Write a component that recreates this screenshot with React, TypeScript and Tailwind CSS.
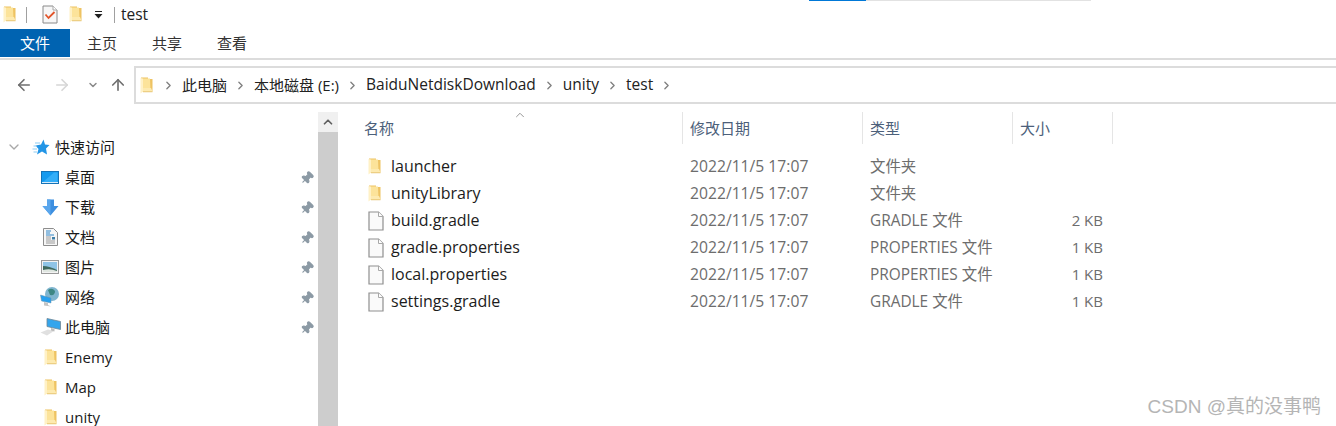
import { ArrowLeft, ArrowRight, ArrowUp, ChevronDown, ChevronRight, ChevronUp, Pin } from 'lucide-react';

const sansStack = "font-['Open_Sans','Noto_Sans_CJK_SC',sans-serif]";

function FolderIcon({ className = '' }: { className?: string }) {
  return (
    <svg width="13" height="17" viewBox="0 0 13 17" className={`shrink-0 ${className}`}>
      <path d="M1 0.5 H8 V2 H12.5 V14.5 H1 Z" fill="#eec363" />
      <path d="M3 1.5 H10 L10.5 13 L12.5 14.5 H3 Z" fill="#fce39a" />
      <path d="M3 11 H11 L12.5 14.5 H3 Z" fill="#fdeab0" />
      <path d="M0.5 1 L3 1.5 V14.5 L0.5 16.5 Z" fill="#fff1c6" />
      <path d="M3 14.5 H12.5 V15.2 H3 Z" fill="#dfb95e" />
    </svg>
  );
}

function FileIcon() {
  return (
    <svg width="16" height="20" viewBox="0 0 16 20" className="shrink-0">
      <path d="M1 1 H10.5 L15 5.5 V19 H1 Z" fill="#fafafa" stroke="#8f8f8f" strokeWidth="1.2" />
      <path d="M10.5 1 V5.5 H15" fill="#fff" stroke="#a8a8a8" strokeWidth="1" />
    </svg>
  );
}

function TaskIcon() {
  return (
    <svg width="16" height="19" viewBox="0 0 16 19" className="shrink-0">
      <path d="M1 1 H11 L15 5 V18 H1 Z" fill="#f7f7f7" stroke="#8a8a8a" />
      <path d="M11 1 V5 H15" fill="#fff" stroke="#a8a8a8" />
      <path d="M3.5 9.5 L6.5 13 L12.5 7" fill="none" stroke="#e2552b" strokeWidth="1.8" />
    </svg>
  );
}

function DropCaret() {
  return (
    <svg width="9" height="8" viewBox="0 0 9 8" className="shrink-0">
      <rect x="1" y="0" width="7" height="1" fill="#222" />
      <path d="M0.5 3 H8.5 L4.5 7.5 Z" fill="#222" />
    </svg>
  );
}

function QuickIcon() {
  return (
    <svg width="18" height="17" viewBox="0 0 18 17" className="shrink-0">
      <path d="M11.5 0.5 L13 5.5 L17.5 6 L14 9.5 L15 15.5 L10 12.5 L5 15.5 L6.5 10 L3.5 6.5 L9 5.5 Z" fill="#2295e6" />
      <path d="M3 4 H8 M1.5 7 H5 M0.5 10 H5 M1.5 13 H5" stroke="#8ccbf2" strokeWidth="1" />
    </svg>
  );
}

function DesktopIcon() {
  return (
    <svg width="18" height="13" viewBox="0 0 18 13" className="shrink-0">
      <rect x="0.5" y="0.5" width="17" height="12" fill="#149aef" stroke="#1473b8" />
      <path d="M2 11 L13 1.5 H16.5 V11 Z" fill="#34aef8" />
      <rect x="1" y="11" width="16" height="1" fill="#d6ecfb" />
    </svg>
  );
}

function DownloadIcon() {
  return (
    <svg width="17" height="17" viewBox="0 0 17 17" className="shrink-0">
      <path d="M5 0.5 H12 V7 H16.5 L8.5 16.5 L0.5 7 H5 Z" fill="#3d8fe0" />
      <path d="M5 0.5 H8.5 V16.5 L0.5 7 H5 Z" fill="#5aa6ec" />
    </svg>
  );
}

function DocIcon() {
  return (
    <svg width="15" height="18" viewBox="0 0 15 18" className="shrink-0">
      <path d="M0.5 0.5 H10.5 L14.5 4.5 V17.5 H0.5 Z" fill="#f6f6f6" stroke="#8d8d8d" />
      <path d="M3 3 H8 M3 5 H7 M3 7 H11" stroke="#2f86c9" />
      <path d="M3 9 H8 M3 11 H8 M3 13 H12 M3 15 H12" stroke="#9a9a9a" />
      <rect x="9" y="9" width="3" height="2.5" fill="#3f7fa8" />
    </svg>
  );
}

function PictureIcon() {
  return (
    <svg width="18" height="14" viewBox="0 0 18 14" className="shrink-0">
      <rect x="0.5" y="0.5" width="17" height="13" fill="#f3f3f3" stroke="#9a9a9a" />
      <rect x="2" y="2" width="14" height="10" fill="#8fc4e6" />
      <path d="M2 6 Q8 6 16 10 V12 H2 Z" fill="#3f6a5e" />
      <path d="M2 10 Q9 8 16 11 V12 H2 Z" fill="#dfe6e0" />
    </svg>
  );
}

function NetworkIcon() {
  return (
    <svg width="20" height="20" viewBox="0 0 20 20" className="shrink-0">
      <circle cx="12" cy="7" r="7" fill="#7fb5cf" />
      <path d="M8 3 Q12 0 15 4 Q15 9 10 8 Z" fill="#3d8784" />
      <path d="M0.5 8 L11 11 V16 L1.5 14 Z" fill="#27a0ef" stroke="#6b93ad" strokeWidth="0.5" />
      <path d="M4 15 L8 16 L8 18 L11 19.5 L4 18.5 Z" fill="#c4c4c4" />
    </svg>
  );
}

function ComputerIcon() {
  return (
    <svg width="21" height="18" viewBox="0 0 21 18" className="shrink-0">
      <path d="M7 0.5 L20.5 3.5 V11.5 L7 8.5 Z" fill="#35a5ec" stroke="#6f8796" strokeWidth="0.8" />
      <path d="M0.5 14.5 L8 11.5 L14 13 L7 17.5 Z" fill="#e0e0e0" />
      <path d="M11 10 L14.5 11 V13.5 L11 12.5 Z" fill="#bcbcbc" />
    </svg>
  );
}

const navItems = [
  { label: '桌面', icon: <DesktopIcon />, pinned: true },
  { label: '下载', icon: <DownloadIcon />, pinned: true },
  { label: '文档', icon: <DocIcon />, pinned: true },
  { label: '图片', icon: <PictureIcon />, pinned: true },
  { label: '网络', icon: <NetworkIcon />, pinned: true },
  { label: '此电脑', icon: <ComputerIcon />, pinned: true },
  { label: 'Enemy', icon: <FolderIcon />, pinned: false },
  { label: 'Map', icon: <FolderIcon />, pinned: false },
  { label: 'unity', icon: <FolderIcon />, pinned: false },
];

const files = [
  { name: 'launcher', type: '文件夹', size: '', folder: true },
  { name: 'unityLibrary', type: '文件夹', size: '', folder: true },
  { name: 'build.gradle', type: 'GRADLE 文件', size: '2 KB', folder: false },
  { name: 'gradle.properties', type: 'PROPERTIES 文件', size: '1 KB', folder: false },
  { name: 'local.properties', type: 'PROPERTIES 文件', size: '1 KB', folder: false },
  { name: 'settings.gradle', type: 'GRADLE 文件', size: '1 KB', folder: false },
];

function Crumb() {
  return <ChevronRight size={13} strokeWidth={2.5} className="mx-[7px] shrink-0 text-[#808080]" />;
}

export default function App() {
  return (
    <div className={`relative h-[426px] w-[1336px] overflow-hidden bg-white text-[15px] text-[#1a1a1a] ${sansStack}`}>
      <div className="absolute left-[809px] top-0 flex h-px">
        <div className="w-[57px] bg-[#0078d7]" />
        <div className="w-[225px] bg-[#e2e2e2]" />
      </div>

      <div className="flex h-[29px] items-center pl-[3px]">
        <FolderIcon />
        <div className="ml-[10px] h-[16px] w-px bg-[#a0a0a0]" />
        <div className="ml-[15px]"><TaskIcon /></div>
        <FolderIcon className="ml-[11px]" />
        <div className="ml-[12px]"><DropCaret /></div>
        <div className="ml-[11px] h-[16px] w-px bg-[#a0a0a0]" />
        <span className="ml-[6px] text-[15.5px] text-[#222]">test</span>
      </div>

      <div className="flex h-[31px] items-start border-b-2 border-[#dcdcdc]">
        <div className="flex h-[28px] w-[70px] items-center justify-center bg-[#0063b1] text-white">文件</div>
        <div className="flex h-[28px] items-center gap-[35px] pl-[17px] text-[#333]">
          <span>主页</span>
          <span>共享</span>
          <span>查看</span>
        </div>
      </div>

      <div className="flex h-[44px] items-end">
        <div className="flex h-[38px] w-[134px] items-center pl-[15px]">
          <ArrowLeft size={18} strokeWidth={2.2} className="text-[#6e6e6e]" />
          <ArrowRight size={18} strokeWidth={2.2} className="ml-[20px] text-[#d6d6d6]" />
          <ChevronDown size={12} strokeWidth={3} className="ml-[16px] text-[#8a8a8a]" />
          <ArrowUp size={18} strokeWidth={2.2} className="ml-[10px] text-[#6e6e6e]" />
        </div>
        <div className="flex h-[38px] flex-1 items-center border-y-2 border-l-2 border-[#dcdcdc] pl-[4px] text-[#222]">
          <FolderIcon />
          <span className="w-[2px]" />
          <Crumb />
          <span className="whitespace-nowrap">此电脑</span>
          <Crumb />
          <span className="whitespace-nowrap">本地磁盘 (E:)</span>
          <Crumb />
          <span className="whitespace-nowrap text-[15.5px]">BaiduNetdiskDownload</span>
          <Crumb />
          <span className="whitespace-nowrap text-[15.5px]">unity</span>
          <Crumb />
          <span className="whitespace-nowrap text-[15.5px]">test</span>
          <Crumb />
        </div>
      </div>

      <div className="mt-[8px] flex h-[314px] overflow-hidden">
        <div className="w-[318px] shrink-0 pt-[20px]">
          <div className="flex h-[30px] items-center pl-[6px]">
            <ChevronDown size={16} strokeWidth={2} className="text-[#a8a8a8]" />
            <span className="ml-[10px]"><QuickIcon /></span>
            <span className="ml-[5px]">快速访问</span>
          </div>
          {navItems.map((item) => (
            <div key={item.label} className="flex h-[30px] items-center pr-[4px]">
              <span className="ml-[35px] flex w-[30px] shrink-0 justify-center">{item.icon}</span>
              <span className="flex-1">{item.label}</span>
              {item.pinned && <Pin size={14} className="mt-[1px] rotate-45 fill-[#8c9aa5] text-[#8c9aa5]" />}
            </div>
          ))}
        </div>

        <div className="w-[20px] shrink-0 bg-[#cdcdcd]">
          <div className="flex h-[20px] items-center justify-center bg-[#f0f0f0]">
            <ChevronUp size={14} strokeWidth={3} className="text-[#606060]" />
          </div>
        </div>

        <div className="flex-1 pl-[20px]">
          <div className="relative flex h-[32px] text-[#4c607a]">
            <ChevronUp size={14} strokeWidth={1.5} className="absolute left-[155px] top-[-4px] text-[#888]" />
            <div className="flex w-[325px] items-center border-r border-[#e5e5e5] pl-[6px]">名称</div>
            <div className="flex w-[180px] items-center border-r border-[#e5e5e5] pl-[7px]">修改日期</div>
            <div className="flex w-[150px] items-center border-r border-[#e5e5e5] pl-[7px]">类型</div>
            <div className="flex w-[100px] items-center border-r border-[#e5e5e5] pl-[7px]">大小</div>
          </div>
          <div className="pt-[9px]">
            {files.map((file) => (
              <div key={file.name} className="flex h-[27px] items-center">
                <div className="flex w-[325px] items-center pl-[10px]">
                  <span className="flex w-[23px] items-center">{file.folder ? <FolderIcon /> : <FileIcon />}</span>
                  <span className="pb-[2px] text-[16px] text-[#1c1c1c]">{file.name}</span>
                </div>
                <div className="w-[180px] pl-[7px] text-[15.7px] text-[#6d6d6d]">2022/11/5 17:07</div>
                <div className="w-[150px] pl-[7px] text-[15.4px] text-[#6d6d6d]">{file.type}</div>
                <div className="w-[90px] text-right text-[#6d6d6d]">{file.size}</div>
              </div>
            ))}
          </div>
        </div>
      </div>

      <div className="absolute bottom-[5px] right-[15px] font-['Liberation_Sans','Noto_Sans_CJK_SC',sans-serif] text-[19px] text-[#b5b5b5]">CSDN @真的没事鸭</div>
    </div>
  );
}
